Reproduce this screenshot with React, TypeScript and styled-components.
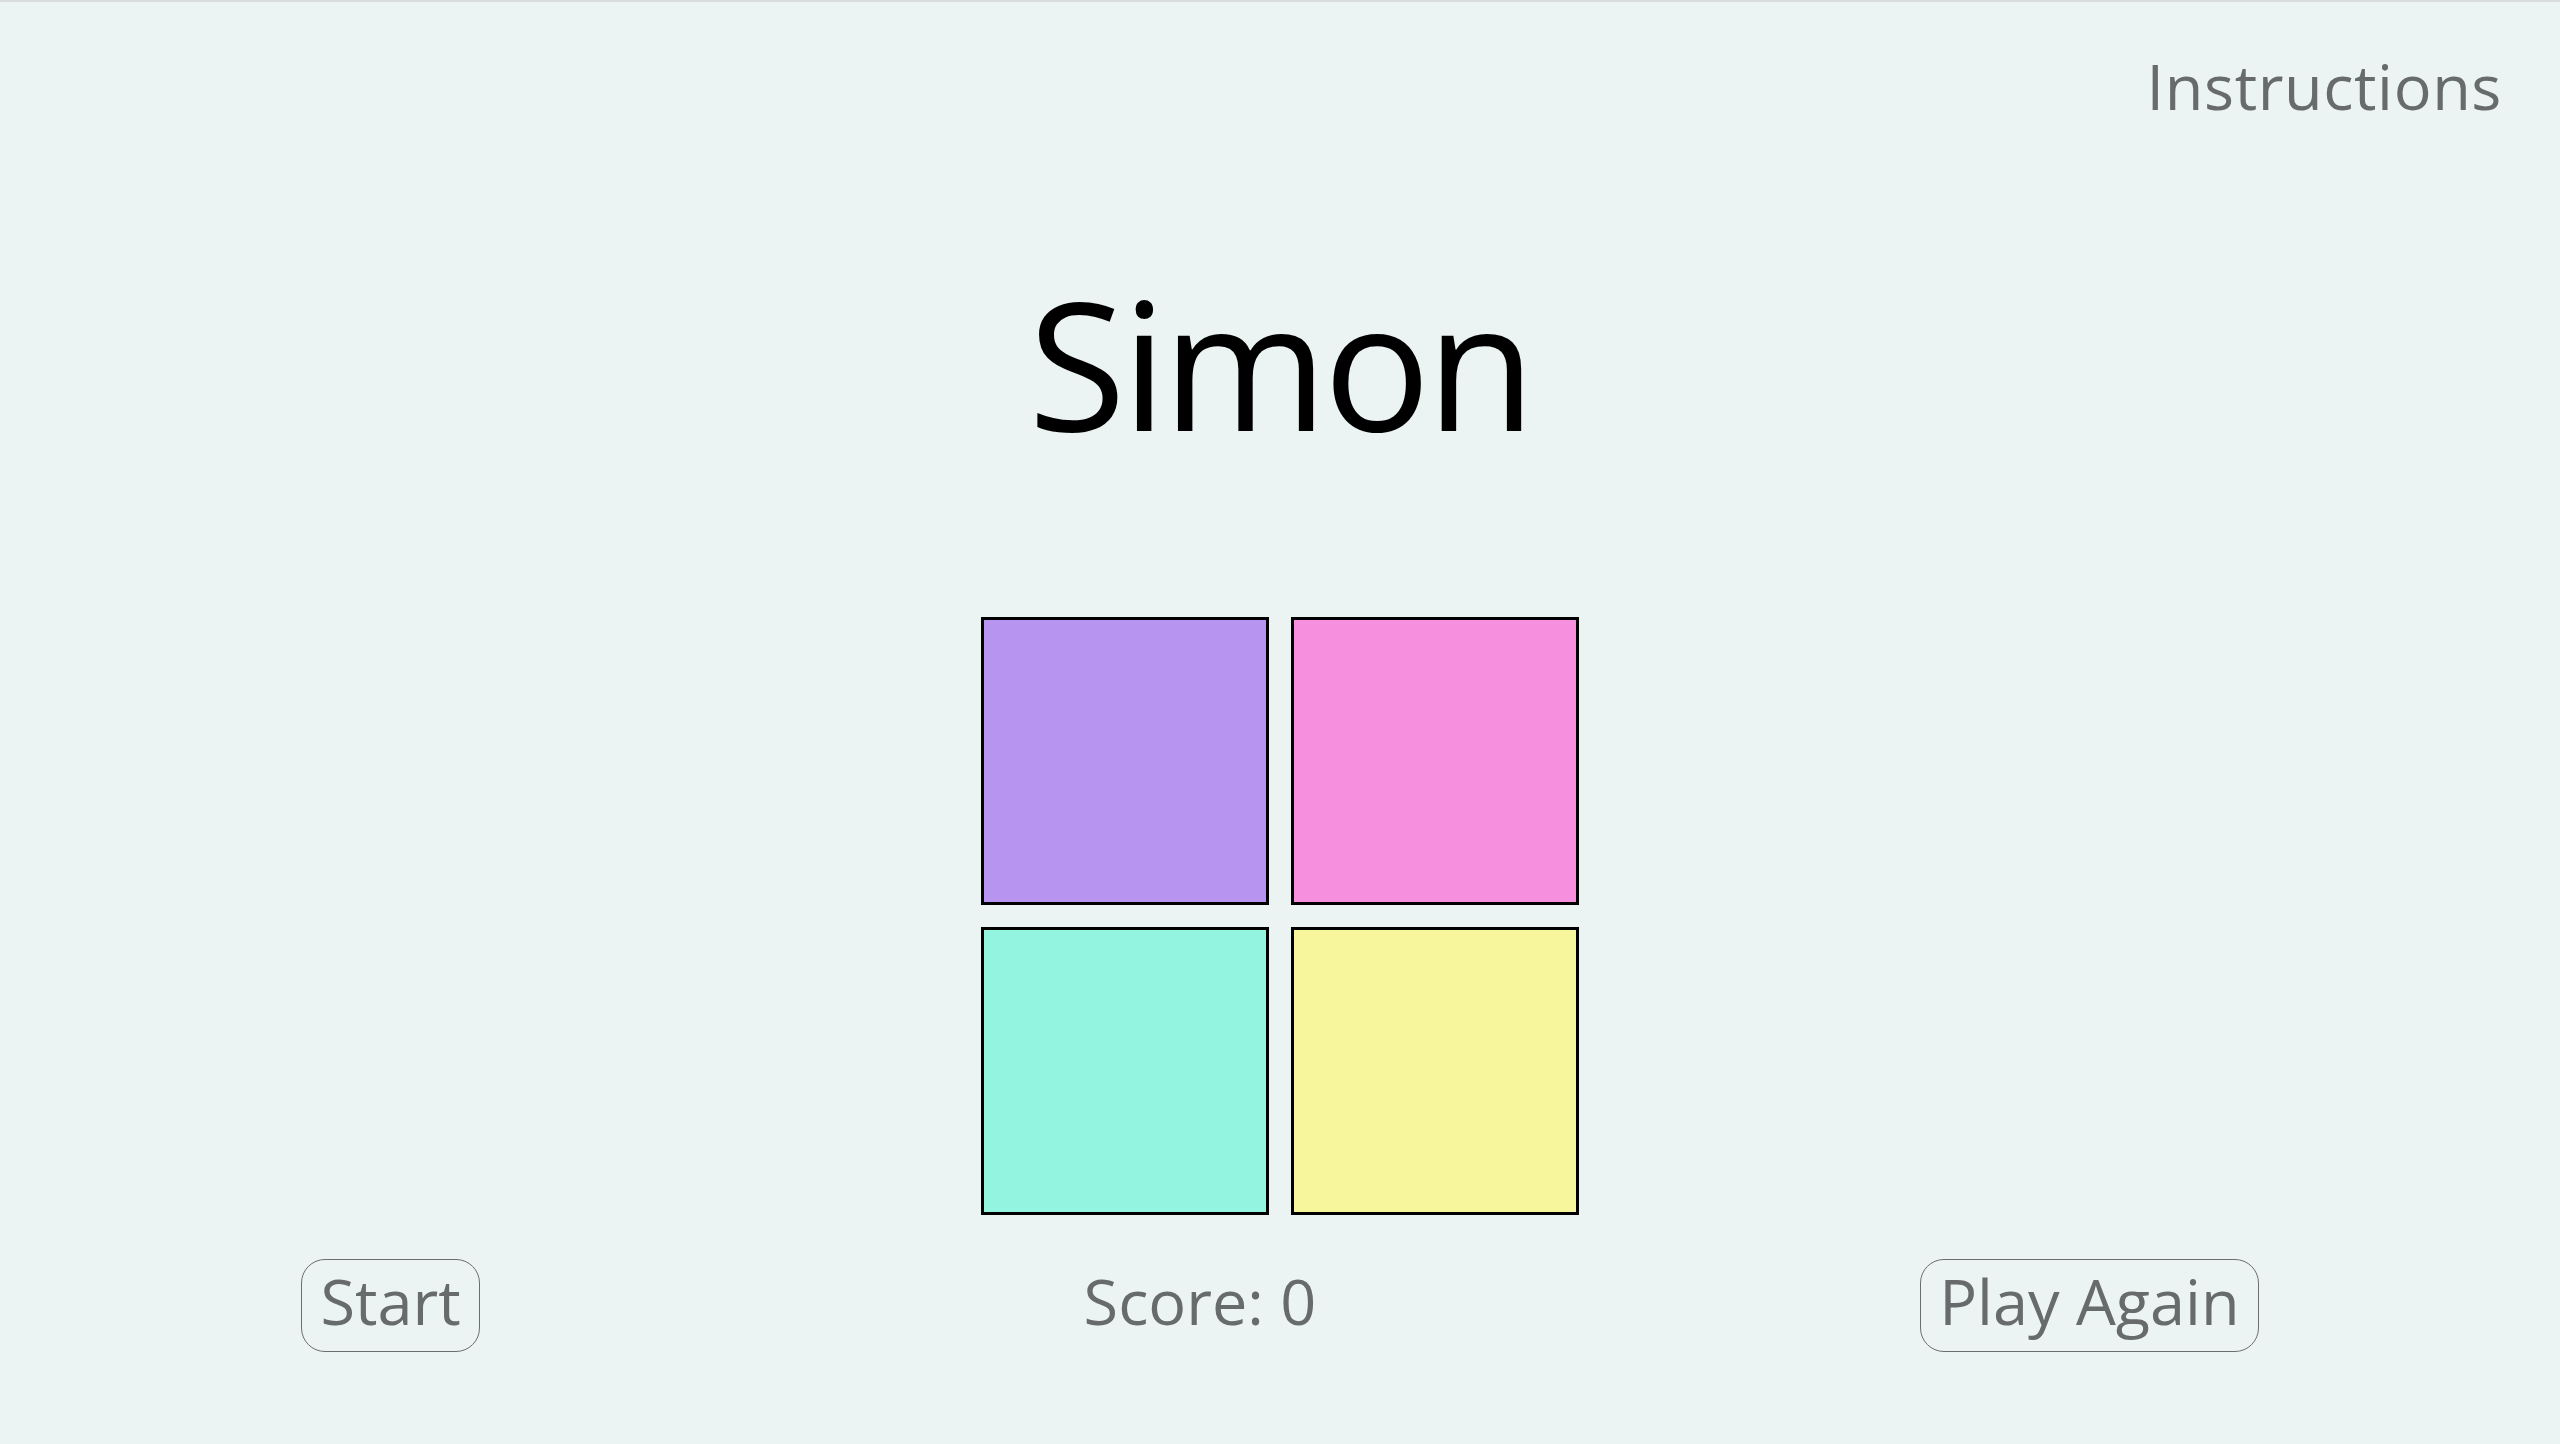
import React from "react";
import styled, { createGlobalStyle } from "styled-components";

const GlobalStyle = createGlobalStyle`
  html, body {
    margin: 0;
    padding: 0;
    background: #ebf4f3;
  }
  body {
    border-top: 2px solid #d8dcdc;
    font-family: "Open Sans", "Noto Sans", sans-serif;
    min-height: 1442px;
  }
  * { box-sizing: border-box; }
`;

const Page = styled.main`
  display: flex;
  flex-direction: column;
  align-items: stretch;
`;

const Header = styled.header`
  display: flex;
  justify-content: flex-end;
  padding: 52px 58px 0 0;
`;

const NavLink = styled.a`
  font-size: 63px;
  line-height: 63px;
  color: #676b6b;
  letter-spacing: 0.6px;
  cursor: pointer;
`;

const Title = styled.h1`
  margin: 156px 0 0;
  text-align: center;
  font-size: 178px;
  line-height: 178px;
  font-weight: 400;
  letter-spacing: -4px;
  color: #000;
`;

const Board = styled.div`
  margin: 166px auto 0;
  display: grid;
  grid-template-columns: repeat(2, 288px);
  grid-auto-rows: 288px;
  gap: 22px;
`;

const Pad = styled.div<{ $color: string }>`
  background: ${(p) => p.$color};
  border: 3px solid #000;
  cursor: pointer;
`;

const Footer = styled.footer`
  margin-top: 44px;
  display: flex;
  justify-content: space-around;
  align-items: flex-start;
`;

const Button = styled.button`
  font-family: inherit;
  font-size: 63px;
  line-height: 77px;
  color: #676b6b;
  letter-spacing: 0;
  background: transparent;
  border: 1px solid #6b6e6e;
  border-radius: 24px;
  padding: 2px 18px 12px;
  cursor: pointer;
`;

const Score = styled.div`
  font-size: 63px;
  line-height: 77px;
  color: #676b6b;
  letter-spacing: 0;
  border: 1px solid transparent;
  padding: 2px 0 12px;
`;

const pads = ["#b794f0", "#f78fdf", "#93f5df", "#f7f69c"];

export default function App() {
  return (
    <>
      <GlobalStyle />
      <Page>
        <Header>
          <NavLink>Instructions</NavLink>
        </Header>
        <Title>Simon</Title>
        <Board>
          {pads.map((c) => (
            <Pad key={c} $color={c} />
          ))}
        </Board>
        <Footer>
          <Button>Start</Button>
          <Score>Score: 0</Score>
          <Button>Play Again</Button>
        </Footer>
      </Page>
    </>
  );
}
